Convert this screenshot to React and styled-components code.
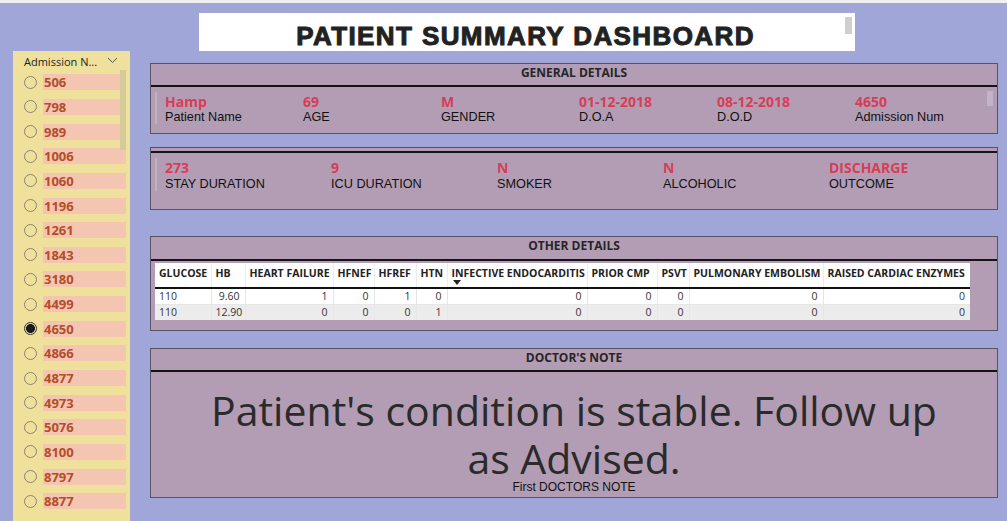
import React from 'react';
import styled, { createGlobalStyle } from 'styled-components';

const admissions = [
  '506', '798', '989', '1006', '1060', '1196', '1261', '1843', '3180',
  '4499', '4650', '4866', '4877', '4973', '5076', '8100', '8797', '8877',
];

const general = [
  ['Hamp', 'Patient Name'],
  ['69', 'AGE'],
  ['M', 'GENDER'],
  ['01-12-2018', 'D.O.A'],
  ['08-12-2018', 'D.O.D'],
  ['4650', 'Admission Num'],
];

const stay = [
  ['273', 'STAY DURATION'],
  ['9', 'ICU DURATION'],
  ['N', 'SMOKER'],
  ['N', 'ALCOHOLIC'],
  ['DISCHARGE', 'OUTCOME'],
];

const columns = [
  { name: 'GLUCOSE', width: 56, left: true },
  { name: 'HB', width: 34 },
  { name: 'HEART FAILURE', width: 88 },
  { name: 'HFNEF', width: 41 },
  { name: 'HFREF', width: 42 },
  { name: 'HTN', width: 31 },
  { name: 'INFECTIVE ENDOCARDITIS', width: 140, sorted: true },
  { name: 'PRIOR CMP', width: 70 },
  { name: 'PSVT', width: 32 },
  { name: 'PULMONARY EMBOLISM', width: 134 },
  { name: 'RAISED CARDIAC ENZYMES', width: 147 },
];

const rows = [
  ['110', '9.60', '1', '0', '1', '0', '0', '0', '0', '0', '0'],
  ['110', '12.90', '0', '0', '0', '1', '0', '0', '0', '0', '0'],
];

const App = () => {
  return (
    <>
      <GlobalStyle />
      <TopStrip />
      <Page>
        <Slicer>
          <SlicerHeader>
            <span>Admission N...</span>
            <svg width="11" height="7" viewBox="0 0 11 7">
              <path d="M1 1l4.5 4.5L10 1" fill="none" stroke="#555" strokeWidth="1" />
            </svg>
          </SlicerHeader>
          <SlicerList>
            {admissions.map((a) => (
              <SlicerItem key={a}>
                <Radio $checked={a === '4650'} />
                <SlicerLabel>{a}</SlicerLabel>
              </SlicerItem>
            ))}
          </SlicerList>
          <SlicerScroll />
        </Slicer>

        <Main>
          <TitleBox>
            <Title>PATIENT SUMMARY DASHBOARD</Title>
            <TitleScroll />
          </TitleBox>

          <Panel>
            <PanelHeader $h={21}>GENERAL DETAILS</PanelHeader>
            <CardBody $top={7} $h={39}>
              <CardRow $col={138} $labelGap={1}>
                {general.map(([v, l]) => (
                  <Field key={l}>
                    <Value>{v}</Value>
                    <Label>{l}</Label>
                  </Field>
                ))}
              </CardRow>
              <CardScroll />
            </CardBody>
          </Panel>

          <Panel $gap={13}>
            <PanelHeader $h={3} />
            <CardBody $top={7} $h={49}>
              <CardRow $col={166} $lineH={31} $labelGap={2}>
                {stay.map(([v, l]) => (
                  <Field key={l}>
                    <Value>{v}</Value>
                    <Label>{l}</Label>
                  </Field>
                ))}
              </CardRow>
            </CardBody>
          </Panel>

          <Panel $gap={26}>
            <PanelHeader $h={22}>OTHER DETAILS</PanelHeader>
            <TableWrap>
              <Table>
                <colgroup>
                  {columns.map((c) => (
                    <col key={c.name} style={{ width: c.width }} />
                  ))}
                </colgroup>
                <thead>
                  <tr>
                    {columns.map((c) => (
                      <Th key={c.name}>
                        {c.name}
                        {c.sorted && <SortMark />}
                      </Th>
                    ))}
                  </tr>
                </thead>
                <tbody>
                  {rows.map((r, i) => (
                    <Tr key={i} $alt={i % 2 === 1}>
                      {r.map((cell, j) => (
                        <Td key={j} $left={columns[j].left}>
                          {cell}
                        </Td>
                      ))}
                    </Tr>
                  ))}
                </tbody>
              </Table>
            </TableWrap>
          </Panel>

          <Panel $gap={17}>
            <PanelHeader $h={21}>DOCTOR'S NOTE</PanelHeader>
            <NoteBody>
              <NoteText>
                Patient's condition is stable. Follow up
                <br />
                as Advised.
              </NoteText>
              <NoteCaption>First DOCTORS NOTE</NoteCaption>
            </NoteBody>
          </Panel>
        </Main>
      </Page>
    </>
  );
};

export default App;

const GlobalStyle = createGlobalStyle`
  html, body {
    margin: 0;
    padding: 0;
    background: #a0a6d8;
    overflow: hidden;
  }
  body {
    width: 1007px;
    height: 521px;
    font-family: "Liberation Sans", Arial, sans-serif;
  }
`;

const TopStrip = styled.div`
  height: 3px;
  background: #efefef;
`;

const Page = styled.div`
  display: flex;
  align-items: flex-start;
  padding-left: 13px;
  height: 518px;
  overflow: hidden;
`;

const Slicer = styled.div`
  position: relative;
  margin-top: 48px;
  width: 117px;
  height: 480px;
  background: #efe19b;
  box-sizing: border-box;
  padding: 0 4px 0 11px;
`;

const SlicerHeader = styled.div`
  height: 17px;
  display: flex;
  align-items: center;
  justify-content: space-between;
  padding: 2px 8px 0 0;
  font-family: "Open Sans", sans-serif;
  font-size: 11px;
  color: #222;
  svg {
    margin-top: -3px;
  }
`;

const SlicerList = styled.div`
  display: flex;
  flex-direction: column;
`;

const SlicerItem = styled.div`
  height: 24.65px;
  display: flex;
  align-items: center;
  gap: 6px;
`;

const Radio = styled.span`
  width: 11px;
  height: 11px;
  border-radius: 50%;
  border: 1px solid #8a8472;
  box-sizing: content-box;
  flex: none;
  background: ${(p) => (p.$checked ? 'radial-gradient(circle, #1a1a1a 0 4.2px, #efe19b 4.7px)' : 'transparent')};
  border-color: ${(p) => (p.$checked ? '#333' : '#8a8472')};
`;

const SlicerLabel = styled.span`
  flex: 1;
  height: 16px;
  line-height: 16px;
  background: #f4c5b0;
  color: #b34e29;
  font-family: "Open Sans", sans-serif;
  font-weight: 700;
  font-size: 13px;
  padding-left: 1px;
`;

const SlicerScroll = styled.div`
  position: absolute;
  left: 107px;
  top: 19px;
  width: 6px;
  height: 80px;
  background: #d5cb98;
`;

const Main = styled.div`
  margin-left: 20px;
  width: 848px;
  display: flex;
  flex-direction: column;
`;

const TitleBox = styled.div`
  position: relative;
  margin: 10px 0 0 49px;
  width: 656px;
  height: 38px;
  background: #fff;
  display: flex;
  align-items: flex-end;
  justify-content: center;
`;

const Title = styled.h1`
  margin: 0 0 0 -3px;
  font-family: "Liberation Sans", Arial, sans-serif;
  font-weight: 700;
  font-size: 26px;
  letter-spacing: 1.4px;
  line-height: 30px;
  color: #222;
  -webkit-text-stroke: 1px #222;
`;

const TitleScroll = styled.div`
  position: absolute;
  right: 3px;
  top: 4px;
  width: 7px;
  height: 17px;
  background: #cfcfcf;
`;

const Panel = styled.section`
  margin-top: ${(p) => p.$gap ?? 12}px;
  border: 1px solid #585262;
  background: #b29db5;
  box-sizing: border-box;
`;

const PanelHeader = styled.div`
  height: ${(p) => p.$h}px;
  border-bottom: 2px solid #141414;
  text-align: center;
  line-height: ${(p) => p.$h - 4}px;
  font-family: "Open Sans", sans-serif;
  font-weight: 700;
  font-size: 12px;
  color: #262626;
`;

const CardBody = styled.div`
  position: relative;
  height: ${(p) => p.$h}px;
  padding: ${(p) => p.$top}px 0 0 4px;
`;

const CardRow = styled.div`
  display: grid;
  grid-template-columns: repeat(auto-fill, ${(p) => p.$col}px);
  border-left: 2px solid #c0b2c2;
  padding-left: 8px;
  margin-top: -2px;
  padding-top: 2px;
  height: ${(p) => p.$lineH ?? 30}px;
  & > div {
    gap: ${(p) => p.$labelGap}px;
  }
`;

const Field = styled.div`
  display: flex;
  flex-direction: column;
`;

const Value = styled.span`
  font-family: "Open Sans", sans-serif;
  font-weight: 700;
  font-size: 14px;
  line-height: 15px;
  color: #d83d55;
`;

const Label = styled.span`
  font-size: 12.7px;
  line-height: 15px;
  color: #111;
`;

const CardScroll = styled.div`
  position: absolute;
  right: 4px;
  top: 4px;
  width: 6px;
  height: 15px;
  background: #c3b3c6;
`;

const TableWrap = styled.div`
  padding: 2px 0 10px 4px;
`;

const Table = styled.table`
  border-collapse: collapse;
  table-layout: fixed;
  width: 815px;
  background: #fff;
  font-family: "Open Sans", sans-serif;
  font-size: 10.5px;
  color: #333;
`;

const Th = styled.th`
  position: relative;
  height: 25px;
  box-sizing: border-box;
  padding: 3px 0 0 4px;
  vertical-align: top;
  line-height: 14px;
  text-align: left;
  font-weight: 700;
  font-size: 10.5px;
  color: #222;
  white-space: nowrap;
  overflow: hidden;
  border-left: 1px solid #ececec;
  border-bottom: 2px solid #111;
  &:first-child {
    border-left: none;
  }
`;

const SortMark = styled.span`
  position: absolute;
  left: 5px;
  bottom: 2px;
  width: 0;
  height: 0;
  border-left: 4px solid transparent;
  border-right: 4px solid transparent;
  border-top: 5px solid #222;
`;

const Tr = styled.tr`
  background: ${(p) => (p.$alt ? '#ececec' : '#fff')};
`;

const Td = styled.td`
  height: 15px;
  padding: 0 5px 0 4px;
  line-height: 15px;
  text-align: ${(p) => (p.$left ? 'left' : 'right')};
  border-left: 1px solid #e6e6e6;
  border-top: 1px solid #e6e6e6;
  &:first-child {
    border-left: none;
  }
`;

const NoteBody = styled.div`
  height: 125px;
  display: flex;
  flex-direction: column;
  align-items: center;
  padding-top: 14px;
  box-sizing: border-box;
`;

const NoteText = styled.p`
  margin: 0;
  text-align: center;
  font-family: "Open Sans", sans-serif;
  font-size: 41px;
  line-height: 48px;
  color: #2a2a2a;
`;

const NoteCaption = styled.div`
  margin-top: -2px;
  font-size: 12px;
  line-height: 14px;
  color: #111;
`;
